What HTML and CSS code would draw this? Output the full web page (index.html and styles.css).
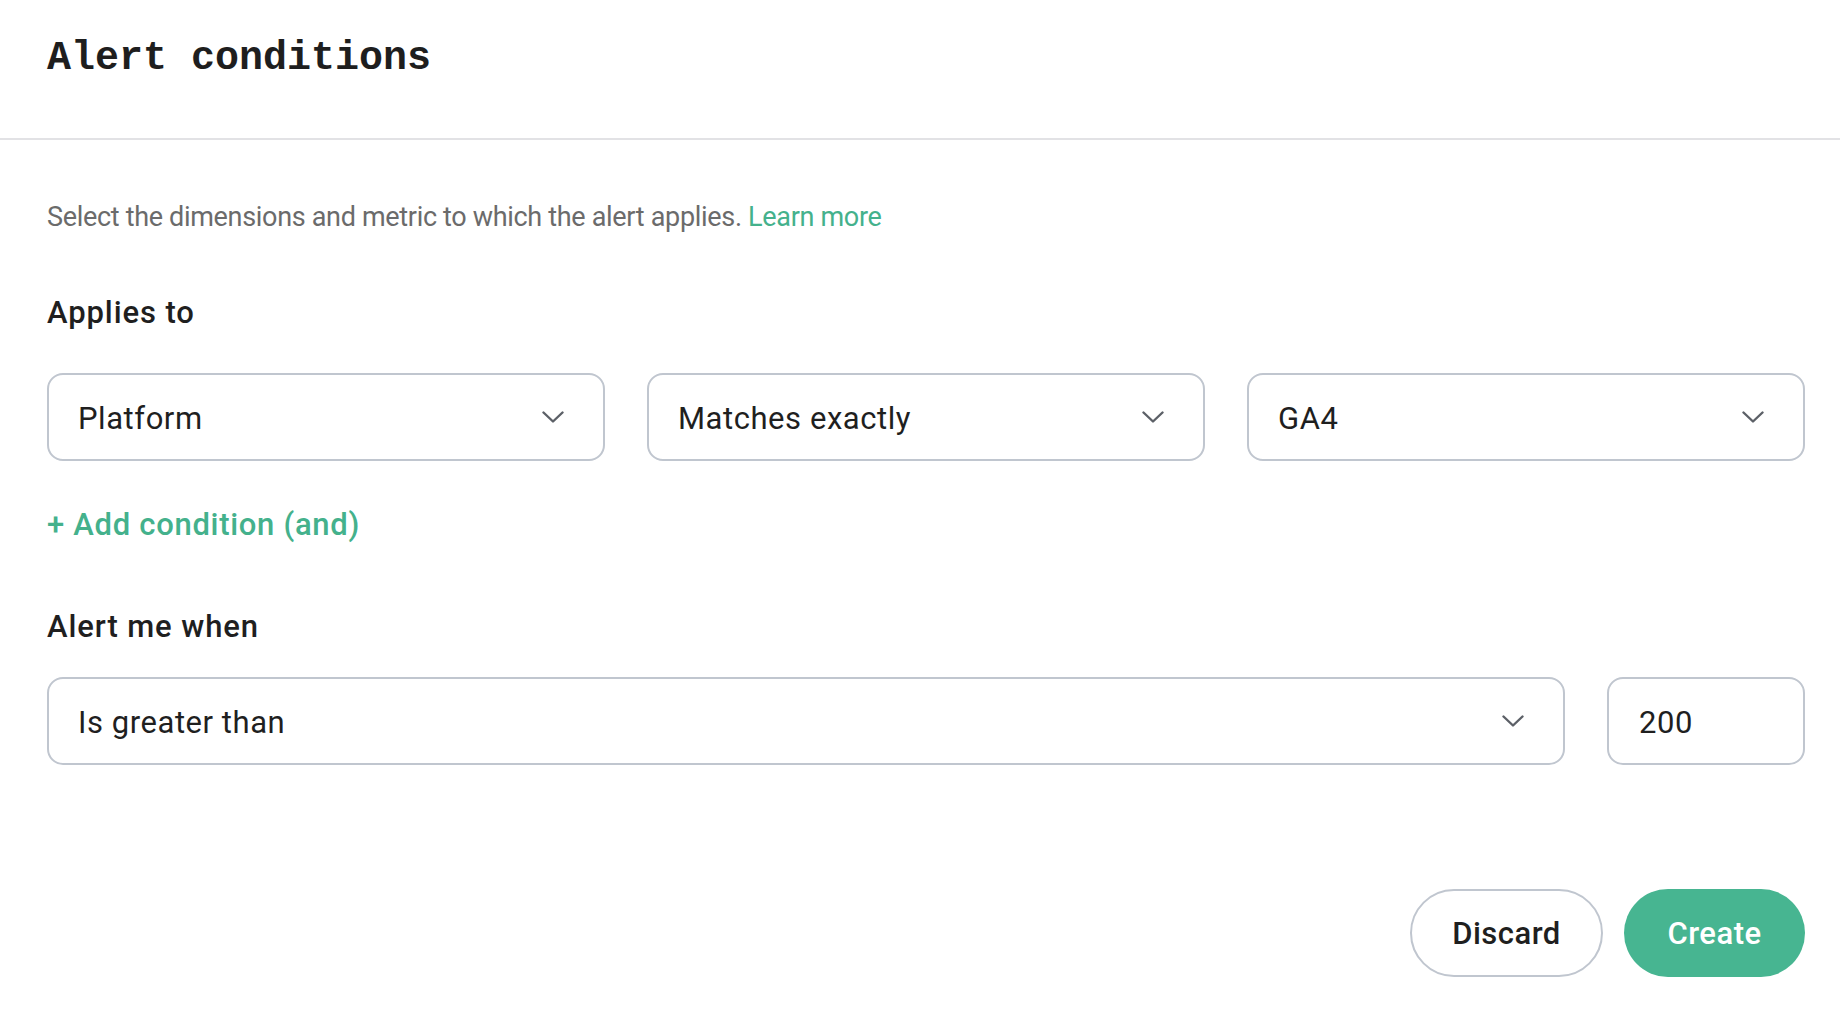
FILE: index.html
```html
<!DOCTYPE html>
<html lang="en">
<head>
<meta charset="utf-8">
<title>Alert conditions</title>
<link rel="stylesheet" href="styles.css">
</head>
<body>
<div class="page">
  <header class="header">
    <h1 class="title">Alert conditions</h1>
  </header>
  <main class="content">
    <p class="desc">Select the dimensions and metric to which the alert applies. <a class="link" href="#">Learn more</a></p>

    <h2 class="label label-applies">Applies to</h2>
    <div class="row row-3">
      <div class="select">
        <span class="select-value">Platform</span>
        <svg class="chevron" width="22" height="12" viewBox="0 0 22 12"><polyline points="1.5,1.5 11,10.5 20.5,1.5" fill="none" stroke="currentColor" stroke-width="2.4" stroke-linecap="round" stroke-linejoin="round"/></svg>
      </div>
      <div class="select">
        <span class="select-value">Matches exactly</span>
        <svg class="chevron" width="22" height="12" viewBox="0 0 22 12"><polyline points="1.5,1.5 11,10.5 20.5,1.5" fill="none" stroke="currentColor" stroke-width="2.4" stroke-linecap="round" stroke-linejoin="round"/></svg>
      </div>
      <div class="select">
        <span class="select-value">GA4</span>
        <svg class="chevron" width="22" height="12" viewBox="0 0 22 12"><polyline points="1.5,1.5 11,10.5 20.5,1.5" fill="none" stroke="currentColor" stroke-width="2.4" stroke-linecap="round" stroke-linejoin="round"/></svg>
      </div>
    </div>

    <a class="add" href="#">+ Add condition (and)</a>

    <h2 class="label label-alert">Alert me when</h2>
    <div class="row row-2">
      <div class="select">
        <span class="select-value">Is greater than</span>
        <svg class="chevron" width="22" height="12" viewBox="0 0 22 12"><polyline points="1.5,1.5 11,10.5 20.5,1.5" fill="none" stroke="currentColor" stroke-width="2.4" stroke-linecap="round" stroke-linejoin="round"/></svg>
      </div>
      <div class="input">200</div>
    </div>

    <div class="actions">
      <button class="btn btn-secondary" type="button">Discard</button>
      <button class="btn btn-primary" type="button">Create</button>
    </div>
  </main>
</div>
</body>
</html>
```

FILE: styles.css
```css
* {
  box-sizing: border-box;
}

html, body {
  margin: 0;
  padding: 0;
  background: #ffffff;
}

body {
  font-family: Roboto, "Noto Sans", Arial, sans-serif;
  color: #1f1f1f;
}

.header {
  height: 140px;
  padding: 35px 0 0 47px;
  border-bottom: 2px solid #e2e2e5;
}

.title {
  margin: 0;
  font-family: "Liberation Mono", "DejaVu Sans Mono", monospace;
  font-weight: 700;
  font-size: 40px;
  line-height: 48px;
  color: #1e1e1e;
}

.content {
  padding: 0 35px 0 47px;
}

.desc {
  margin: 59px 0 0;
  font-size: 27px;
  line-height: 36px;
  letter-spacing: -0.32px;
  color: #6b6b6b;
}

.link {
  color: #44b18c;
  text-decoration: none;
}

.label {
  margin: 0;
  font-size: 31px;
  line-height: 40px;
  font-weight: 500;
  letter-spacing: 0.9px;
  color: #1f1f1f;
}

.label-applies {
  margin-top: 58px;
}

.label-alert {
  margin-top: 62px;
}

.row {
  display: grid;
}

.row-3 {
  margin-top: 40px;
  grid-template-columns: repeat(3, 1fr);
  gap: 42px;
}

.row-2 {
  margin-top: 30px;
  grid-template-columns: 1fr 198px;
  gap: 42px;
}

.select,
.input {
  height: 88px;
  border: 2px solid #c0c6cf;
  border-radius: 16px;
  display: flex;
  align-items: center;
  font-size: 31px;
  line-height: 40px;
  letter-spacing: 0.55px;
  color: #1f1f1f;
  padding-top: 3px;
}

.select {
  justify-content: space-between;
  padding-left: 29px;
  padding-right: 39px;
}

.input {
  padding-left: 30px;
}

.chevron {
  color: #5c6067;
  display: block;
  margin-top: -3px;
}

.add {
  display: block;
  margin-top: 44px;
  font-size: 31px;
  line-height: 40px;
  font-weight: 500;
  letter-spacing: 0.7px;
  color: #44b18c;
  text-decoration: none;
}

.actions {
  margin-top: 124px;
  display: flex;
  justify-content: flex-end;
  gap: 21px;
}

.btn {
  height: 88px;
  border-radius: 44px;
  font-family: Roboto, "Noto Sans", Arial, sans-serif;
  font-size: 31px;
  font-weight: 500;
  letter-spacing: 0.5px;
  padding: 0;
  cursor: pointer;
}

.btn-secondary {
  width: 193px;
  background: #ffffff;
  border: 2px solid #c0c6cf;
  color: #1f1f1f;
}

.btn-primary {
  width: 181px;
  background: #47b591;
  border: none;
  color: #ffffff;
}
```
